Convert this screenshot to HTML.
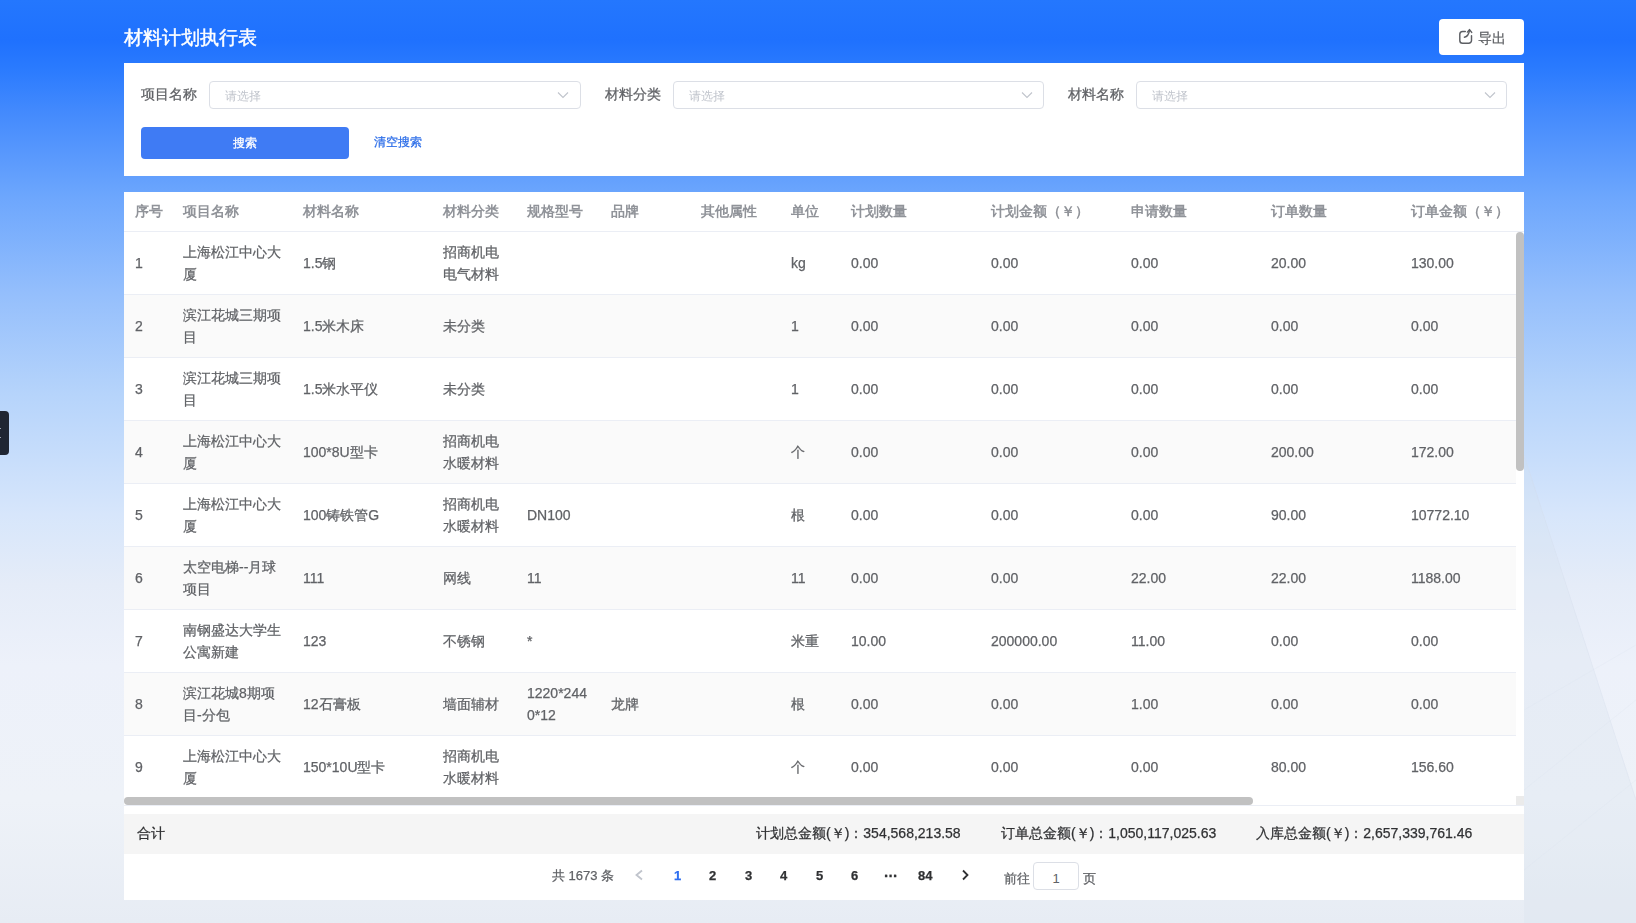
<!DOCTYPE html>
<html><head><meta charset="utf-8">
<style>
*{box-sizing:border-box;margin:0;padding:0}
html,body{width:1636px;height:923px;overflow:hidden}
body{font-family:"Liberation Sans",sans-serif;position:relative;
background:linear-gradient(180deg,#2477fe 0px,#1f71fe 40px,#2b7bfe 70px,#458bfd 115px,#6ca6fd 195px,#95bffc 295px,#b6d4fb 395px,#d7e6fb 515px,#e5ecf8 585px,#edf1fa 665px,#eef2f8 800px,#e7ecf4 923px);}
.abs{position:absolute}
.title{left:124px;top:25.5px;color:#fff;font-size:19px;font-weight:normal;-webkit-text-stroke:0.45px #fff;line-height:24px}
.export{left:1439px;top:19px;width:85px;height:36px;background:#fff;border-radius:4px}
.export svg{position:absolute;left:0;top:0}
.export .tx{position:absolute;left:39px;top:10px;font-size:14px;color:#606266;line-height:18px}
.filter{left:124px;top:63px;width:1400px;height:113px;background:#fff}
.lbl{font-size:14px;color:#606266;line-height:20px}
.sel{height:28px;border:1px solid #dcdfe6;border-radius:4px;background:#fff}
.sel .ph{position:absolute;left:15px;top:6px;font-size:12px;color:#c0c4cc;line-height:16px}
.sel svg{position:absolute;right:12px;top:9px}
.btn{left:141px;top:127px;width:208px;height:32px;background:#3f7bf4;border-radius:4px;color:#fff;font-size:12px;text-align:center;line-height:33px;-webkit-text-stroke:0.3px #fff}
.link{left:374px;top:134px;font-size:12px;color:#2d6ee8;line-height:16px}
.table{left:124px;top:192px;width:1400px;height:708px;background:#fff;overflow:hidden}
.hd{position:absolute;top:0;left:0;height:40px;width:1400px;border-bottom:1px solid #ebeef5}
.hd span{position:absolute;top:10px;font-size:14px;font-weight:bold;color:#909399;line-height:18px;white-space:nowrap}
.body{position:absolute;left:0;top:0;width:1400px;height:605px;overflow:hidden}
.row{position:absolute;left:0;width:1392px;height:63px;border-bottom:1px solid #ebeef5;background:#fff}
.row.s{background:#fafafa}
.row span{position:absolute;font-size:14px;color:#606266;line-height:22px;white-space:nowrap}
.row .t1{top:20px}
.row .t2{top:9px}
.vbar{left:1392px;top:40px;width:8px;height:239px;background:#c1c1c1;border-radius:4px}
.vtrack{left:1392px;top:40px;width:8px;height:574px;background:#f1f1f1}
.hbar{left:0;top:605px;width:1129px;height:8px;background:#c1c1c1;border-radius:4px}
.sum{left:0;top:622px;width:1400px;height:40px;background:#f5f5f5}
.sum span{position:absolute;top:10px;font-size:14px;color:#303133;line-height:18px;white-space:nowrap}
.pg span{position:absolute;white-space:nowrap}
.row span,.hd span,.sum span,.pg span,.lbl,.ph,.link,.btn,.title,.export .tx{will-change:transform}
.row span,.sum span,.lbl,.pg span,.export .tx,.link{-webkit-text-stroke:0.25px currentColor}
</style></head><body>
<div class="abs title">材料计划执行表</div>
<div class="abs export">
<svg width="85" height="36" viewBox="0 0 85 36"><g fill="none" stroke="#5c5e63" stroke-width="1.45" stroke-linecap="round" stroke-linejoin="round">
<path d="M26.3 12.4 H23.6 A2.8 2.8 0 0 0 20.8 15.2 V21.4 A2.8 2.8 0 0 0 23.6 24.2 H29.7 A2.8 2.8 0 0 0 32.5 21.4 V16.8"/>
<path d="M25.4 18.2 Q29.6 17.6 30.5 11.2"/>
<path d="M28.4 13.1 L30.5 10.6 L32.7 13.4"/>
</g></svg>
<span class="tx">导出</span></div>
<div class="abs filter">
  <div class="abs lbl" style="left:17px;top:21px">项目名称</div>
  <div class="abs sel" style="left:85px;top:18px;width:372px"><span class="ph">请选择</span><svg style="right:11px" width="12" height="8" viewBox="0 0 12 8"><path d="M1 1.5 L6 6.5 L11 1.5" fill="none" stroke="#c0c4cc" stroke-width="1.1"/></svg></div>
  <div class="abs lbl" style="left:481px;top:21px">材料分类</div>
  <div class="abs sel" style="left:549px;top:18px;width:371px"><span class="ph">请选择</span><svg style="right:10px" width="12" height="8" viewBox="0 0 12 8"><path d="M1 1.5 L6 6.5 L11 1.5" fill="none" stroke="#c0c4cc" stroke-width="1.1"/></svg></div>
  <div class="abs lbl" style="left:944px;top:21px">材料名称</div>
  <div class="abs sel" style="left:1012px;top:18px;width:371px"><span class="ph">请选择</span><svg style="right:10px" width="12" height="8" viewBox="0 0 12 8"><path d="M1 1.5 L6 6.5 L11 1.5" fill="none" stroke="#c0c4cc" stroke-width="1.1"/></svg></div>
</div>
<div class="abs btn">搜索</div>
<div class="abs link">清空搜索</div>
<div class="abs table">
  <div class="hd">
<span style="left:10.5px">序号</span>
<span style="left:58.5px">项目名称</span>
<span style="left:178.5px">材料名称</span>
<span style="left:318.5px">材料分类</span>
<span style="left:402.5px">规格型号</span>
<span style="left:486.5px">品牌</span>
<span style="left:576.5px">其他属性</span>
<span style="left:666.5px">单位</span>
<span style="left:726.5px">计划数量</span>
<span style="left:866.5px">计划金额（￥）</span>
<span style="left:1006.5px">申请数量</span>
<span style="left:1146.5px">订单数量</span>
<span style="left:1286.5px">订单金额（￥）</span>
  </div>
  <div class="body">
<div class="row" style="top:40px"><span class="t1" style="left:10.5px">1</span><span class="t2" style="left:58.5px">上海松江中心大<br>厦</span><span class="t1" style="left:178.5px">1.5钢</span><span class="t2" style="left:318.5px">招商机电<br>电气材料</span><span class="t1" style="left:666.5px">kg</span><span class="t1" style="left:726.5px">0.00</span><span class="t1" style="left:866.5px">0.00</span><span class="t1" style="left:1006.5px">0.00</span><span class="t1" style="left:1146.5px">20.00</span><span class="t1" style="left:1286.5px">130.00</span></div>
<div class="row s" style="top:103px"><span class="t1" style="left:10.5px">2</span><span class="t2" style="left:58.5px">滨江花城三期项<br>目</span><span class="t1" style="left:178.5px">1.5米木床</span><span class="t1" style="left:318.5px">未分类</span><span class="t1" style="left:666.5px">1</span><span class="t1" style="left:726.5px">0.00</span><span class="t1" style="left:866.5px">0.00</span><span class="t1" style="left:1006.5px">0.00</span><span class="t1" style="left:1146.5px">0.00</span><span class="t1" style="left:1286.5px">0.00</span></div>
<div class="row" style="top:166px"><span class="t1" style="left:10.5px">3</span><span class="t2" style="left:58.5px">滨江花城三期项<br>目</span><span class="t1" style="left:178.5px">1.5米水平仪</span><span class="t1" style="left:318.5px">未分类</span><span class="t1" style="left:666.5px">1</span><span class="t1" style="left:726.5px">0.00</span><span class="t1" style="left:866.5px">0.00</span><span class="t1" style="left:1006.5px">0.00</span><span class="t1" style="left:1146.5px">0.00</span><span class="t1" style="left:1286.5px">0.00</span></div>
<div class="row s" style="top:229px"><span class="t1" style="left:10.5px">4</span><span class="t2" style="left:58.5px">上海松江中心大<br>厦</span><span class="t1" style="left:178.5px">100*8U型卡</span><span class="t2" style="left:318.5px">招商机电<br>水暖材料</span><span class="t1" style="left:666.5px">个</span><span class="t1" style="left:726.5px">0.00</span><span class="t1" style="left:866.5px">0.00</span><span class="t1" style="left:1006.5px">0.00</span><span class="t1" style="left:1146.5px">200.00</span><span class="t1" style="left:1286.5px">172.00</span></div>
<div class="row" style="top:292px"><span class="t1" style="left:10.5px">5</span><span class="t2" style="left:58.5px">上海松江中心大<br>厦</span><span class="t1" style="left:178.5px">100铸铁管G</span><span class="t2" style="left:318.5px">招商机电<br>水暖材料</span><span class="t1" style="left:402.5px">DN100</span><span class="t1" style="left:666.5px">根</span><span class="t1" style="left:726.5px">0.00</span><span class="t1" style="left:866.5px">0.00</span><span class="t1" style="left:1006.5px">0.00</span><span class="t1" style="left:1146.5px">90.00</span><span class="t1" style="left:1286.5px">10772.10</span></div>
<div class="row s" style="top:355px"><span class="t1" style="left:10.5px">6</span><span class="t2" style="left:58.5px">太空电梯--月球<br>项目</span><span class="t1" style="left:178.5px">111</span><span class="t1" style="left:318.5px">网线</span><span class="t1" style="left:402.5px">11</span><span class="t1" style="left:666.5px">11</span><span class="t1" style="left:726.5px">0.00</span><span class="t1" style="left:866.5px">0.00</span><span class="t1" style="left:1006.5px">22.00</span><span class="t1" style="left:1146.5px">22.00</span><span class="t1" style="left:1286.5px">1188.00</span></div>
<div class="row" style="top:418px"><span class="t1" style="left:10.5px">7</span><span class="t2" style="left:58.5px">南钢盛达大学生<br>公寓新建</span><span class="t1" style="left:178.5px">123</span><span class="t1" style="left:318.5px">不锈钢</span><span class="t1" style="left:402.5px">*</span><span class="t1" style="left:666.5px">米重</span><span class="t1" style="left:726.5px">10.00</span><span class="t1" style="left:866.5px">200000.00</span><span class="t1" style="left:1006.5px">11.00</span><span class="t1" style="left:1146.5px">0.00</span><span class="t1" style="left:1286.5px">0.00</span></div>
<div class="row s" style="top:481px"><span class="t1" style="left:10.5px">8</span><span class="t2" style="left:58.5px">滨江花城8期项<br>目-分包</span><span class="t1" style="left:178.5px">12石膏板</span><span class="t1" style="left:318.5px">墙面辅材</span><span class="t2" style="left:402.5px">1220*244<br>0*12</span><span class="t1" style="left:486.5px">龙牌</span><span class="t1" style="left:666.5px">根</span><span class="t1" style="left:726.5px">0.00</span><span class="t1" style="left:866.5px">0.00</span><span class="t1" style="left:1006.5px">1.00</span><span class="t1" style="left:1146.5px">0.00</span><span class="t1" style="left:1286.5px">0.00</span></div>
<div class="row" style="top:544px"><span class="t1" style="left:10.5px">9</span><span class="t2" style="left:58.5px">上海松江中心大<br>厦</span><span class="t1" style="left:178.5px">150*10U型卡</span><span class="t2" style="left:318.5px">招商机电<br>水暖材料</span><span class="t1" style="left:666.5px">个</span><span class="t1" style="left:726.5px">0.00</span><span class="t1" style="left:866.5px">0.00</span><span class="t1" style="left:1006.5px">0.00</span><span class="t1" style="left:1146.5px">80.00</span><span class="t1" style="left:1286.5px">156.60</span></div>
  </div>
  <div class="abs" style="left:1392px;top:604px;width:8px;height:9px;background:#ebebeb"></div>
  <div class="abs vbar"></div>
  <div class="abs hbar"></div>
  <div class="abs" style="left:0;top:613px;width:1400px;height:1px;background:#ebeef5"></div>
  <div class="abs sum">
    <span style="left:13px">合计</span>
    <span style="left:632px">计划总金额(￥)：354,568,213.58</span>
    <span style="left:877px">订单总金额(￥)：1,050,117,025.63</span>
    <span style="left:1132px">入库总金额(￥)：2,657,339,761.46</span>
  </div>
  <div class="abs pg" style="left:0;top:662px;width:1400px;height:46px">
    <span style="left:428px;top:13px;font-size:13px;color:#606266;line-height:18px">共 1673 条</span>
    <svg class="abs" style="left:509px;top:14px" width="12" height="14" viewBox="0 0 12 14"><path d="M9 2.5 L3.5 7 L9 11.5" fill="none" stroke="#c0c4cc" stroke-width="1.8"/></svg>
    <span style="left:550px;top:13px;font-size:13px;font-weight:bold;color:#2e6ff0;line-height:18px">1</span>
    <span style="left:585px;top:13px;font-size:13px;font-weight:bold;color:#303133;line-height:18px">2</span>
    <span style="left:621px;top:13px;font-size:13px;font-weight:bold;color:#303133;line-height:18px">3</span>
    <span style="left:656px;top:13px;font-size:13px;font-weight:bold;color:#303133;line-height:18px">4</span>
    <span style="left:692px;top:13px;font-size:13px;font-weight:bold;color:#303133;line-height:18px">5</span>
    <span style="left:727px;top:13px;font-size:13px;font-weight:bold;color:#303133;line-height:18px">6</span>
    <span style="left:760px;top:13px;font-size:15px;font-weight:bold;color:#303133;line-height:18px;letter-spacing:-0.5px">···</span>
    <span style="left:794px;top:13px;font-size:13px;font-weight:bold;color:#303133;line-height:18px">84</span>
    <svg class="abs" style="left:835px;top:14px" width="12" height="14" viewBox="0 0 12 14"><path d="M4 2.5 L8.5 7 L4 11.5" fill="none" stroke="#303133" stroke-width="1.8"/></svg>
    <span style="left:880px;top:16px;font-size:13px;color:#606266;line-height:18px">前往</span>
    <div class="abs" style="left:909px;top:0px;width:46px;height:28px;border:1px solid #dcdfe6;border-radius:3px;top:200px"></div>
    <span style="left:959px;top:16px;font-size:13px;color:#606266;line-height:18px">页</span>
  </div>
</div>
<div class="abs" style="left:1033px;top:862px;width:46px;height:28px;border:1px solid #dcdfe6;border-radius:4px;background:#fff;text-align:center;font-size:13px;color:#606266;line-height:32px">1</div>
<div class="abs" style="left:0;top:411px;width:9px;height:44px;background:#1f2633;border-radius:0 4px 4px 0"></div>
<div class="abs" style="left:0;top:428px;width:1px;height:1px;background:#9ba3b0"></div>
<div class="abs" style="left:0;top:437px;width:1px;height:1px;background:#9ba3b0"></div>
<svg class="abs" style="left:1524px;top:400px" width="112" height="523" viewBox="0 0 112 523"><path d="M0 55 L112 400 L112 523 L0 523 Z" fill="#d5deea" opacity="0.25"/><path d="M0 55 L112 400" fill="none" stroke="#d4deec" stroke-width="1" opacity="0.35"/><path d="M0 310 L112 245 M0 390 L112 300 M0 470 L112 380" fill="none" stroke="#dde5f0" stroke-width="1" opacity="0.25"/></svg>
</body></html>
